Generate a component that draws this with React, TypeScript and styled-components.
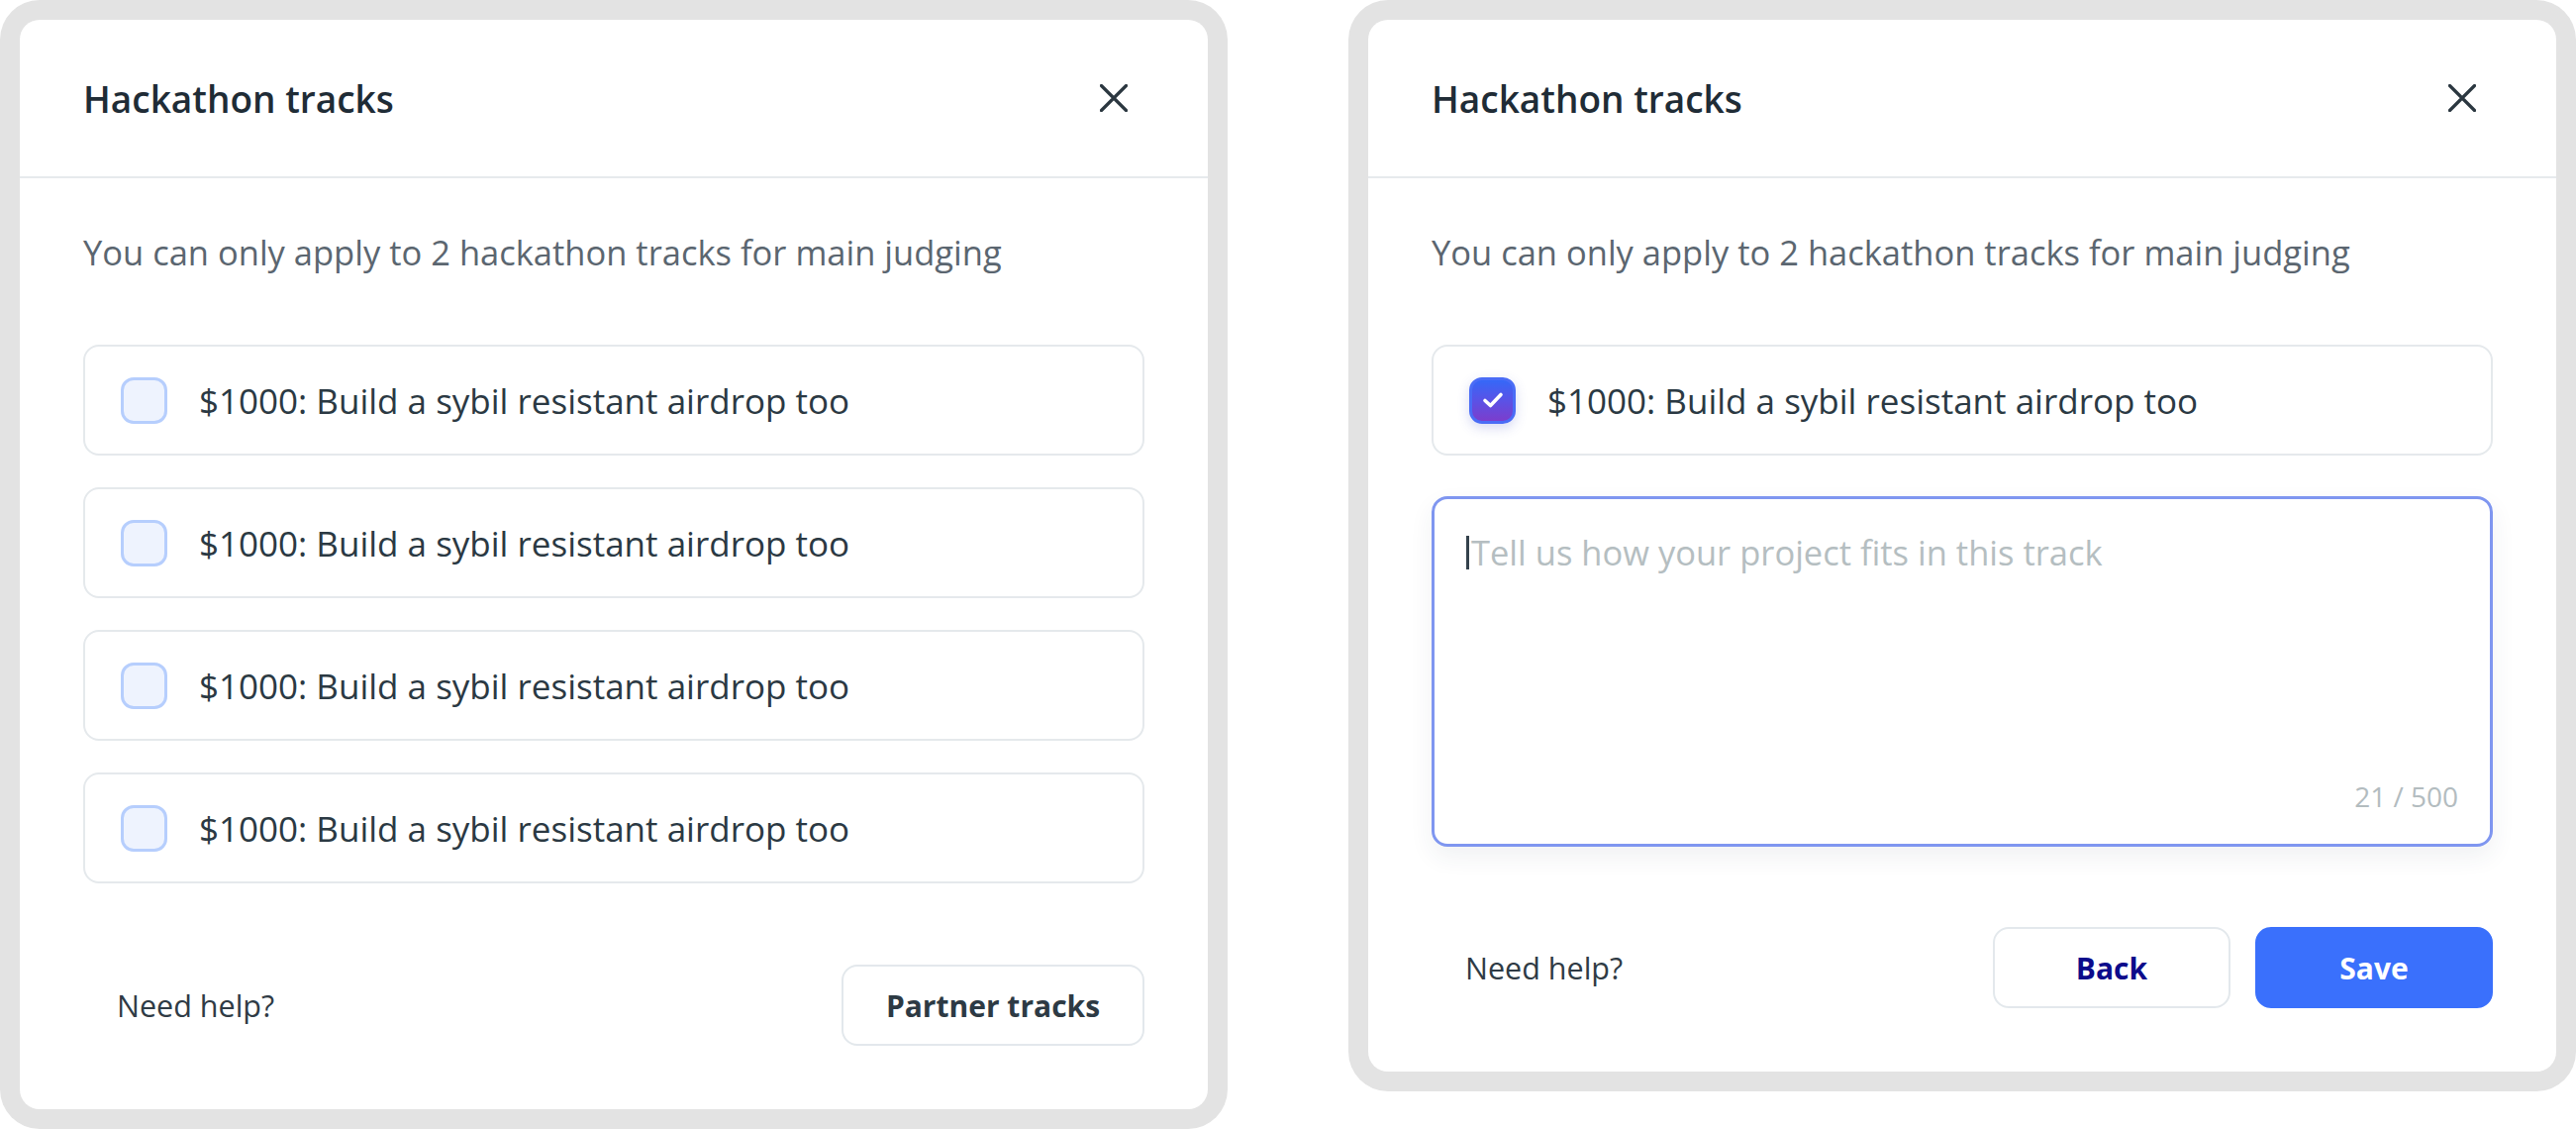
import styled, { createGlobalStyle } from 'styled-components';

const GlobalStyle = createGlobalStyle`
  html, body {
    margin: 0;
    padding: 0;
    background: #ffffff;
  }
  body {
    font-family: "Open Sans", Lato, sans-serif;
    -webkit-font-smoothing: antialiased;
  }
`;

const Page = styled.div`
  display: flex;
  align-items: flex-start;
  gap: 122px;
  width: 2602px;
`;

const Frame = styled.div`
  width: 1200px;
  padding: 20px;
  background: #e3e3e3;
  border-radius: 40px;
`;

const Modal = styled.section`
  background: #ffffff;
  border-radius: 20px;
  overflow: hidden;
`;

const Header = styled.header`
  display: flex;
  align-items: center;
  justify-content: space-between;
  height: 158px;
  padding: 0 64px;
  border-bottom: 2px solid #e6eaed;
`;

const Title = styled.h2`
  margin: 0;
  font-size: 37px;
  font-weight: 600;
  color: #1f2c36;
`;

const CloseButton = styled.button`
  display: flex;
  align-items: center;
  justify-content: center;
  width: 40px;
  height: 40px;
  margin-right: 11px;
  padding: 0;
  border: none;
  background: none;
  cursor: pointer;
`;

const Body = styled.div`
  padding: 53px 64px 64px;
  display: flex;
  flex-direction: column;
`;

const Lead = styled.p`
  margin: 0 0 71px;
  font-size: 34.5px;
  line-height: 44px;
  color: #5b6670;
`;

const TrackList = styled.div`
  display: flex;
  flex-direction: column;
  gap: 32px;
`;

const TrackCard = styled.label`
  display: flex;
  align-items: center;
  gap: 32px;
  height: 108px;
  padding: 0 36px;
  border: 2px solid #e5e9ec;
  border-radius: 16px;
  cursor: pointer;
`;

const Box = styled.span<{ checked?: boolean }>`
  display: flex;
  align-items: center;
  justify-content: center;
  flex: none;
  width: 47px;
  height: 47px;
  box-sizing: border-box;
  border-radius: 13px;
  border: 3px solid ${({ checked }) => (checked ? '#4a6cf6' : '#b6cefd')};
  background: ${({ checked }) =>
    checked ? 'linear-gradient(180deg, #3568f8 0%, #5a52e6 50%, #7c3dcc 100%)' : '#eef3fe'};
  box-shadow: ${({ checked }) => (checked ? '0 4px 12px rgba(70, 80, 200, 0.22)' : 'none')};
`;

const TrackName = styled.span`
  font-size: 35px;
  color: #2b3943;
`;

const Field = styled.div`
  display: flex;
  flex-direction: column;
  margin-top: 41px;
  padding: 32px;
  box-sizing: border-box;
  height: 354px;
  border: 3px solid #7f96f0;
  border-radius: 16px;
  box-shadow: 0 10px 24px rgba(40, 60, 90, 0.07);
`;

const FieldLine = styled.div`
  display: flex;
  align-items: center;
  font-size: 34.5px;
  line-height: 44px;
`;

const Caret = styled.span`
  width: 3px;
  height: 34px;
  margin-right: 2px;
  background: #34424c;
`;

const Placeholder = styled.span`
  color: #b5bec1;
`;

const Counter = styled.div`
  margin-top: auto;
  align-self: flex-end;
  font-size: 28px;
  line-height: 32px;
  color: #b3bcbf;
`;

const Footer = styled.footer<{ gapTop: number }>`
  display: flex;
  align-items: center;
  justify-content: space-between;
  margin-top: ${({ gapTop }) => gapTop}px;
`;

const HelpLink = styled.a`
  padding: 0 34px;
  font-size: 30.5px;
  color: #2f3b45;
  text-decoration: none;
`;

const Actions = styled.div`
  display: flex;
  gap: 25px;
`;

const Button = styled.button<{ variant?: 'primary' | 'outline'; width: number }>`
  width: ${({ width }) => width}px;
  height: 82px;
  border-radius: 16px;
  font-family: "Open Sans", Lato, sans-serif;
  font-size: 30px;
  font-weight: 700;
  cursor: pointer;
  border: 2px solid ${({ variant }) => (variant === 'primary' ? '#3a70fc' : '#e3e8ec')};
  background: ${({ variant }) => (variant === 'primary' ? '#3a70fc' : '#ffffff')};
  color: ${({ variant }) => (variant === 'primary' ? '#ffffff' : '#2d3a44')};
`;

const BackButton = styled(Button)`
  color: #0c0b8b;
`;

const CloseIcon = () => (
  <svg width="28" height="28" viewBox="0 0 28 28" fill="none">
    <path d="M1.5 1.5 L26.5 26.5 M26.5 1.5 L1.5 26.5" stroke="#2b3740" strokeWidth="3.2" strokeLinecap="round" />
  </svg>
);

const CheckIcon = () => (
  <svg width="22" height="18" viewBox="0 0 22 18" fill="none">
    <path d="M3 9.5 L8.5 14.5 L19 3.5" stroke="#ffffff" strokeWidth="3.6" strokeLinecap="round" strokeLinejoin="round" />
  </svg>
);

const trackTitle = '$1000: Build a sybil resistant airdrop too';

const Track = ({ checked }: { checked?: boolean }) => (
  <TrackCard>
    <Box checked={checked}>{checked && <CheckIcon />}</Box>
    <TrackName>{trackTitle}</TrackName>
  </TrackCard>
);

const ModalHeader = () => (
  <Header>
    <Title>Hackathon tracks</Title>
    <CloseButton aria-label="Close">
      <CloseIcon />
    </CloseButton>
  </Header>
);

const App = () => {
  return (
    <>
      <GlobalStyle />
      <Page>
        <Frame>
          <Modal>
            <ModalHeader />
            <Body>
              <Lead>You can only apply to 2 hackathon tracks for main judging</Lead>
              <TrackList>
                <Track />
                <Track />
                <Track />
                <Track />
              </TrackList>
              <Footer gapTop={82}>
                <HelpLink href="#">Need help?</HelpLink>
                <Button variant="outline" width={306}>Partner tracks</Button>
              </Footer>
            </Body>
          </Modal>
        </Frame>
        <Frame>
          <Modal>
            <ModalHeader />
            <Body>
              <Lead>You can only apply to 2 hackathon tracks for main judging</Lead>
              <TrackList>
                <Track checked />
              </TrackList>
              <Field>
                <FieldLine>
                  <Caret />
                  <Placeholder>Tell us how your project fits in this track</Placeholder>
                </FieldLine>
                <Counter>21 / 500</Counter>
              </Field>
              <Footer gapTop={81}>
                <HelpLink href="#">Need help?</HelpLink>
                <Actions>
                  <BackButton variant="outline" width={240}>Back</BackButton>
                  <Button variant="primary" width={240}>Save</Button>
                </Actions>
              </Footer>
            </Body>
          </Modal>
        </Frame>
      </Page>
    </>
  );
};

export default App;
